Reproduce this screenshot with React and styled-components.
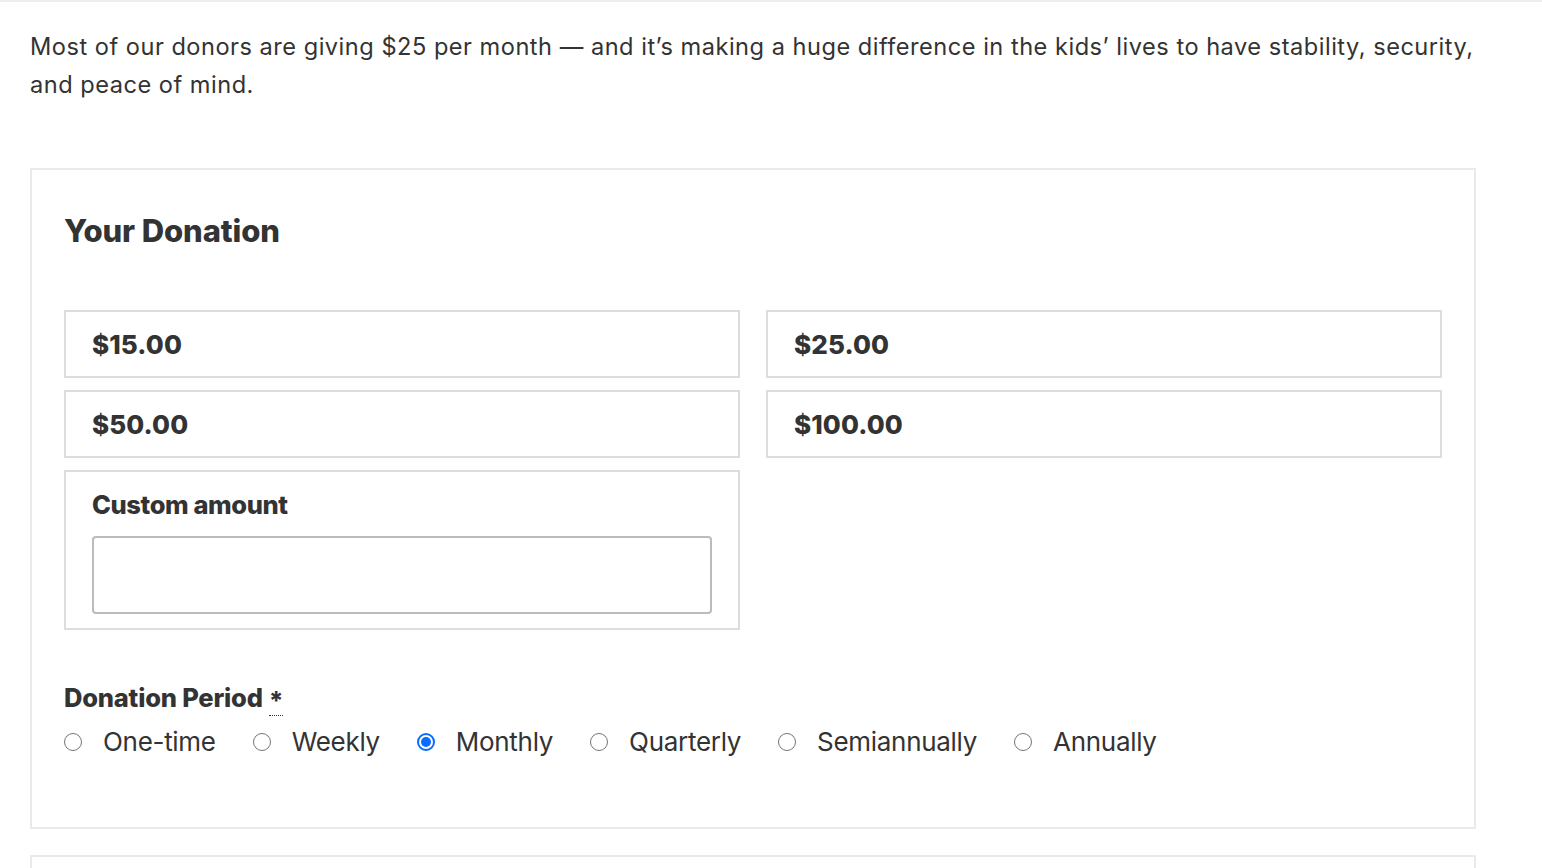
import styled, { createGlobalStyle } from "styled-components";

const GlobalStyle = createGlobalStyle`
  body {
    margin: 0;
    background: #fff;
    font-family: Inter, "Libre Franklin", "Liberation Sans", sans-serif;
    color: #333;
  }
`;

const Page = styled.div`
  border-top: 2px solid #eee;
  padding: 26px 0 0 30px;
`;

const Content = styled.div`
  width: 1446px;
`;

const Intro = styled.p`
  margin: 0 -44px 64px 0;
  font-size: 23.6px;
  line-height: 38px;
  color: #333;
  letter-spacing: 0.5px;
`;

const Box = styled.section`
  border: 2px solid #eaeaea;
  padding: 43px 32px 67px 32px;
  margin-bottom: 26px;
`;

const Heading = styled.h2`
  margin: 0 0 61px 0;
  font-size: 31px;
  line-height: 36px;
  font-weight: 800;
  color: #333;
  letter-spacing: -0.1px;
`;

const AmountGrid = styled.div`
  display: grid;
  grid-template-columns: 1fr 1fr;
  column-gap: 26px;
  row-gap: 12px;
`;

const Amount = styled.div`
  height: 68px;
  box-sizing: border-box;
  border: 2px solid #ddd;
  padding: 0 26px;
  display: flex;
  align-items: center;
  font-size: 26px;
  font-weight: 800;
  color: #333;
  letter-spacing: 0.1px;
`;

const Custom = styled.div`
  height: 160px;
  box-sizing: border-box;
  border: 2px solid #ddd;
  padding: 15px 26px 14px 26px;
  display: flex;
  flex-direction: column;
  gap: 13px;
`;

const FieldLabel = styled.label`
  font-size: 25.5px;
  line-height: 36px;
  font-weight: 800;
  color: #333;
  letter-spacing: -0.4px;
`;

const TextInput = styled.input`
  height: 78px;
  box-sizing: border-box;
  border: 2px solid #bbb;
  border-radius: 4px;
  outline: none;
  font-size: 22px;
  padding: 0 12px;
  font-family: inherit;
`;

const Period = styled.div`
  margin-top: 50px;
`;

const PeriodLabel = styled.div`
  font-size: 25.5px;
  line-height: 36px;
  font-weight: 800;
  color: #333;
  letter-spacing: -0.2px;
  margin-bottom: 8px;
`;

const Required = styled.abbr`
  text-decoration: none;
  border-bottom: 1px dotted #333;
  margin-left: 6px;
  line-height: 1;
  display: inline-block;
  height: 27px;
  vertical-align: -3px;
`;

const Options = styled.div`
  display: flex;
  align-items: center;
  gap: 37px;
`;

const Option = styled.label`
  display: flex;
  align-items: center;
  gap: 21px;
  font-size: 26px;
  line-height: 36px;
  color: #333;
  letter-spacing: -0.3px;
`;

const Radio = styled.span`
  width: 18px;
  height: 18px;
  box-sizing: border-box;
  border-radius: 50%;
  border: ${(p) => (p.$checked ? "2px solid #0a6cff" : "1.5px solid #767676")};
  display: flex;
  align-items: center;
  justify-content: center;

  &::after {
    content: "";
    width: 10px;
    height: 10px;
    border-radius: 50%;
    background: #0a6cff;
    display: ${(p) => (p.$checked ? "block" : "none")};
  }
`;

const NextBox = styled.section`
  border: 2px solid #eaeaea;
  border-bottom: none;
  height: 60px;
`;

const amounts = ["$15.00", "$25.00", "$50.00", "$100.00"];
const periods = ["One-time", "Weekly", "Monthly", "Quarterly", "Semiannually", "Annually"];

export default function App() {
  return (
    <Page>
      <GlobalStyle />
      <Content>
        <Intro>
          Most of our donors are giving $25 per month — and it’s making a huge difference in the kids’ lives to have
          stability, security, and peace of mind.
        </Intro>
        <Box>
          <Heading>Your Donation</Heading>
          <AmountGrid>
            {amounts.map((a) => (
              <Amount key={a}>{a}</Amount>
            ))}
            <Custom>
              <FieldLabel>Custom amount</FieldLabel>
              <TextInput type="text" />
            </Custom>
          </AmountGrid>
          <Period>
            <PeriodLabel>
              Donation Period<Required title="required">*</Required>
            </PeriodLabel>
            <Options>
              {periods.map((p) => (
                <Option key={p}>
                  <Radio $checked={p === "Monthly"} />
                  {p}
                </Option>
              ))}
            </Options>
          </Period>
        </Box>
        <NextBox />
      </Content>
    </Page>
  );
}
